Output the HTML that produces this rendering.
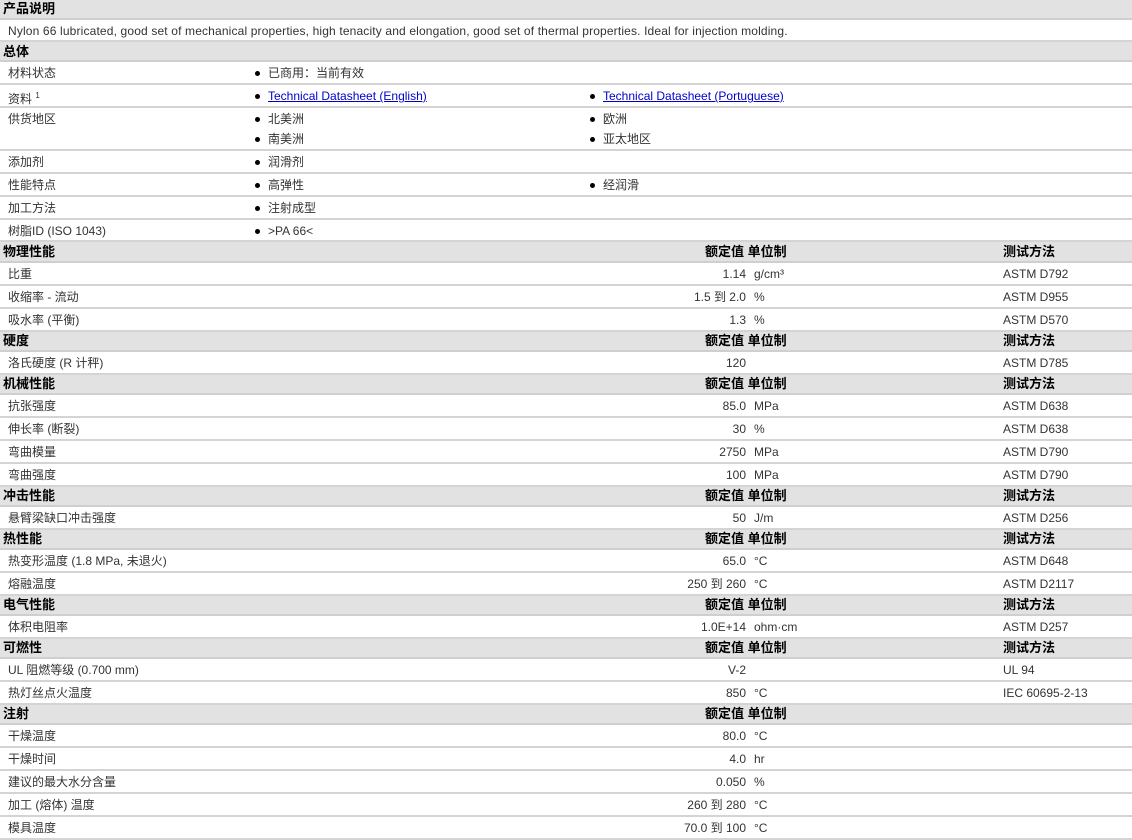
<!DOCTYPE html>
<html><head><meta charset="utf-8"><style>
*{margin:0;padding:0;box-sizing:border-box}
body{width:1132px;height:840px;overflow:hidden;background:#fff;font-family:"Liberation Sans","Noto Sans CJK SC",sans-serif;font-size:12px;color:#333;position:relative}
.h{position:absolute;left:0;width:1132px;background:#e2e2e2;border-bottom:2px solid #cfcfcf;font-weight:bold;font-size:13px;color:#000}
.r{position:absolute;left:0;width:1132px;border-bottom:2px solid #d4d4d4}
.r .t{margin-top:-1px}
.t{position:absolute;white-space:nowrap;line-height:14px}
.b::before{content:"";position:absolute;left:-13px;top:5px;width:5px;height:5px;border-radius:50%;background:#000}
a{color:#00c;text-decoration:underline}
.v{text-align:right;width:200px}
</style></head><body>
<div class="h" style="top:0;height:20px"><span class="t" style="left:3px;top:2px">产品说明</span></div>
<div class="r" style="top:20px;height:22px"><span class="t" style="left:8px;top:5px;letter-spacing:0.15px">Nylon 66 lubricated, good set of mechanical properties, high tenacity and elongation, good set of thermal properties. Ideal for injection molding.</span></div>
<div class="h" style="top:42px;height:20px"><span class="t" style="left:3px;top:3px">总体</span></div>

<div class="r" style="top:62px;height:23px"><span class="t" style="left:8px;top:5px">材料状态</span><span class="t b" style="left:268px;top:5px">已商用：当前有效</span></div>
<div class="r" style="top:85px;height:23px"><span class="t" style="left:8px;top:5px">资料 <sup style="font-size:8px">1</sup></span><span class="t b" style="left:268px;top:5px"><a>Technical Datasheet (English)</a></span><span class="t b" style="left:603px;top:5px"><a>Technical Datasheet (Portuguese)</a></span></div>
<div class="r" style="top:108px;height:43px"><span class="t" style="left:8px;top:5px">供货地区</span><span class="t b" style="left:268px;top:5px">北美洲</span><span class="t b" style="left:603px;top:5px">欧洲</span><span class="t b" style="left:268px;top:25px">南美洲</span><span class="t b" style="left:603px;top:25px">亚太地区</span></div>
<div class="r" style="top:151px;height:23px"><span class="t" style="left:8px;top:5px">添加剂</span><span class="t b" style="left:268px;top:5px">润滑剂</span></div>
<div class="r" style="top:174px;height:23px"><span class="t" style="left:8px;top:5px">性能特点</span><span class="t b" style="left:268px;top:5px">高弹性</span><span class="t b" style="left:603px;top:5px">经润滑</span></div>
<div class="r" style="top:197px;height:23px"><span class="t" style="left:8px;top:5px">加工方法</span><span class="t b" style="left:268px;top:5px">注射成型</span></div>
<div class="r" style="top:220px;height:22px"><span class="t" style="left:8px;top:5px">树脂ID (ISO 1043)</span><span class="t b" style="left:268px;top:5px">&gt;PA 66&lt;</span></div>

<div class="h" style="top:242px;height:21px"><span class="t" style="left:3px;top:3px">物理性能</span><span class="t" style="left:705px;top:3px">额定值 单位制</span><span class="t" style="left:1003px;top:3px">测试方法</span></div>
<div class="r" style="top:263px;height:23px"><span class="t" style="left:8px;top:5px">比重</span><span class="t v" style="left:546px;top:5px">1.14</span><span class="t" style="left:754px;top:5px">g/cm³</span><span class="t" style="left:1003px;top:5px">ASTM D792</span></div>
<div class="r" style="top:286px;height:23px"><span class="t" style="left:8px;top:5px">收缩率 - 流动</span><span class="t v" style="left:546px;top:5px">1.5 到 2.0</span><span class="t" style="left:754px;top:5px">%</span><span class="t" style="left:1003px;top:5px">ASTM D955</span></div>
<div class="r" style="top:309px;height:23px"><span class="t" style="left:8px;top:5px">吸水率 (平衡)</span><span class="t v" style="left:546px;top:5px">1.3</span><span class="t" style="left:754px;top:5px">%</span><span class="t" style="left:1003px;top:5px">ASTM D570</span></div>

<div class="h" style="top:332px;height:20px"><span class="t" style="left:3px;top:2px">硬度</span><span class="t" style="left:705px;top:2px">额定值 单位制</span><span class="t" style="left:1003px;top:2px">测试方法</span></div>
<div class="r" style="top:352px;height:23px"><span class="t" style="left:8px;top:5px">洛氏硬度 (R 计秤)</span><span class="t v" style="left:546px;top:5px">120</span><span class="t" style="left:1003px;top:5px">ASTM D785</span></div>

<div class="h" style="top:375px;height:20px"><span class="t" style="left:3px;top:2px">机械性能</span><span class="t" style="left:705px;top:2px">额定值 单位制</span><span class="t" style="left:1003px;top:2px">测试方法</span></div>
<div class="r" style="top:395px;height:23px"><span class="t" style="left:8px;top:5px">抗张强度</span><span class="t v" style="left:546px;top:5px">85.0</span><span class="t" style="left:754px;top:5px">MPa</span><span class="t" style="left:1003px;top:5px">ASTM D638</span></div>
<div class="r" style="top:418px;height:23px"><span class="t" style="left:8px;top:5px">伸长率 (断裂)</span><span class="t v" style="left:546px;top:5px">30</span><span class="t" style="left:754px;top:5px">%</span><span class="t" style="left:1003px;top:5px">ASTM D638</span></div>
<div class="r" style="top:441px;height:23px"><span class="t" style="left:8px;top:5px">弯曲模量</span><span class="t v" style="left:546px;top:5px">2750</span><span class="t" style="left:754px;top:5px">MPa</span><span class="t" style="left:1003px;top:5px">ASTM D790</span></div>
<div class="r" style="top:464px;height:23px"><span class="t" style="left:8px;top:5px">弯曲强度</span><span class="t v" style="left:546px;top:5px">100</span><span class="t" style="left:754px;top:5px">MPa</span><span class="t" style="left:1003px;top:5px">ASTM D790</span></div>

<div class="h" style="top:487px;height:20px"><span class="t" style="left:3px;top:2px">冲击性能</span><span class="t" style="left:705px;top:2px">额定值 单位制</span><span class="t" style="left:1003px;top:2px">测试方法</span></div>
<div class="r" style="top:507px;height:23px"><span class="t" style="left:8px;top:5px">悬臂梁缺口冲击强度</span><span class="t v" style="left:546px;top:5px">50</span><span class="t" style="left:754px;top:5px">J/m</span><span class="t" style="left:1003px;top:5px">ASTM D256</span></div>

<div class="h" style="top:530px;height:20px"><span class="t" style="left:3px;top:2px">热性能</span><span class="t" style="left:705px;top:2px">额定值 单位制</span><span class="t" style="left:1003px;top:2px">测试方法</span></div>
<div class="r" style="top:550px;height:23px"><span class="t" style="left:8px;top:5px">热变形温度 (1.8 MPa, 未退火)</span><span class="t v" style="left:546px;top:5px">65.0</span><span class="t" style="left:754px;top:5px">°C</span><span class="t" style="left:1003px;top:5px">ASTM D648</span></div>
<div class="r" style="top:573px;height:23px"><span class="t" style="left:8px;top:5px">熔融温度</span><span class="t v" style="left:546px;top:5px">250 到 260</span><span class="t" style="left:754px;top:5px">°C</span><span class="t" style="left:1003px;top:5px">ASTM D2117</span></div>

<div class="h" style="top:596px;height:20px"><span class="t" style="left:3px;top:2px">电气性能</span><span class="t" style="left:705px;top:2px">额定值 单位制</span><span class="t" style="left:1003px;top:2px">测试方法</span></div>
<div class="r" style="top:616px;height:23px"><span class="t" style="left:8px;top:5px">体积电阻率</span><span class="t v" style="left:546px;top:5px">1.0E+14</span><span class="t" style="left:754px;top:5px">ohm·cm</span><span class="t" style="left:1003px;top:5px">ASTM D257</span></div>

<div class="h" style="top:639px;height:20px"><span class="t" style="left:3px;top:2px">可燃性</span><span class="t" style="left:705px;top:2px">额定值 单位制</span><span class="t" style="left:1003px;top:2px">测试方法</span></div>
<div class="r" style="top:659px;height:23px"><span class="t" style="left:8px;top:5px">UL 阻燃等级 (0.700 mm)</span><span class="t v" style="left:546px;top:5px">V-2</span><span class="t" style="left:1003px;top:5px">UL 94</span></div>
<div class="r" style="top:682px;height:23px"><span class="t" style="left:8px;top:5px">热灯丝点火温度</span><span class="t v" style="left:546px;top:5px">850</span><span class="t" style="left:754px;top:5px">°C</span><span class="t" style="left:1003px;top:5px">IEC 60695-2-13</span></div>

<div class="h" style="top:705px;height:20px"><span class="t" style="left:3px;top:2px">注射</span><span class="t" style="left:705px;top:2px">额定值 单位制</span></div>
<div class="r" style="top:725px;height:23px"><span class="t" style="left:8px;top:5px">干燥温度</span><span class="t v" style="left:546px;top:5px">80.0</span><span class="t" style="left:754px;top:5px">°C</span></div>
<div class="r" style="top:748px;height:23px"><span class="t" style="left:8px;top:5px">干燥时间</span><span class="t v" style="left:546px;top:5px">4.0</span><span class="t" style="left:754px;top:5px">hr</span></div>
<div class="r" style="top:771px;height:23px"><span class="t" style="left:8px;top:5px">建议的最大水分含量</span><span class="t v" style="left:546px;top:5px">0.050</span><span class="t" style="left:754px;top:5px">%</span></div>
<div class="r" style="top:794px;height:23px"><span class="t" style="left:8px;top:5px">加工 (熔体) 温度</span><span class="t v" style="left:546px;top:5px">260 到 280</span><span class="t" style="left:754px;top:5px">°C</span></div>
<div class="r" style="top:817px;height:23px"><span class="t" style="left:8px;top:5px">模具温度</span><span class="t v" style="left:546px;top:5px">70.0 到 100</span><span class="t" style="left:754px;top:5px">°C</span></div>
</body></html>
